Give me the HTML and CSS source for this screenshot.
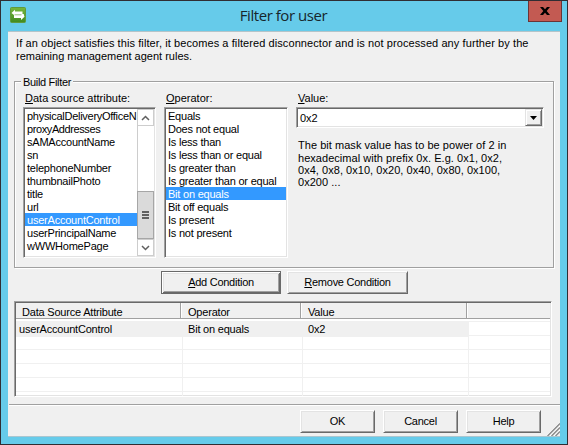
FILE: index.html
```html
<!DOCTYPE html>
<html lang="en">
<head>
<meta charset="utf-8">
<title>Filter for user</title>
<link rel="stylesheet" href="styles.css">
</head>
<body>
<div class="window">
  <header class="titlebar">
    <svg class="app-icon" width="16" height="16" viewBox="0 0 16 16">
      <defs><linearGradient id="g" x1="0" y1="0" x2="0" y2="1"><stop offset="0" stop-color="#77b83c"/><stop offset="1" stop-color="#3f8a20"/></linearGradient></defs>
      <rect x=".5" y=".5" width="15" height="15" rx="1" fill="url(#g)" stroke="#5f9a3c"/>
      <path d="M1.500 6L5 2.800V4.500h7.500V7h1.200L14.500 9.800 11 13v-2H4V8z" fill="#fff"/>
      <path d="M4.500 7.800h7" stroke="#7db25c" stroke-width=".8"/>
    </svg>
    <h1 class="title">Filter for user</h1>
    <button class="close"><svg width="10" height="8" viewBox="0 0 10 8"><path d="M0 0h3l2 2.300L7 0h3L6.700 4 10 8H7L5 5.700 3 8H0l3.300-4z"/></svg></button>
  </header>
  <main class="client">
    <p class="intro"><span class="i1">If an object satisfies this filter, it becomes a filtered disconnector and is not processed any further by the</span><br><span class="i2">remaining management agent rules.</span></p>
    <fieldset class="group">
      <legend>Build Filter</legend>
      <div class="col attr">
        <label><u>D</u>ata source attribute:</label>
        <div class="listbox">
          <ul class="items">
            <li class="long">physicalDeliveryOfficeN</li><li class="tight">proxyAddresses</li><li>sAMAccountName</li><li>sn</li><li>telephoneNumber</li><li>thumbnailPhoto</li><li>title</li><li>url</li><li class="selected">userAccountControl</li><li>userPrincipalName</li><li>wWWHomePage</li>
          </ul>
          <div class="scroll">
            <div class="arrow"><svg width="9" height="6" viewBox="0 0 9 6"><path d="M1 5l3.500-3.500L8 5"/></svg></div>
            <div class="track"></div>
            <div class="thumb"><i></i><i></i><i></i></div>
            <div class="arrow"><svg width="9" height="6" viewBox="0 0 9 6"><path d="M1 1l3.500 3.500L8 1"/></svg></div>
          </div>
        </div>
      </div>
      <div class="col oper">
        <label><u>O</u>perator:</label>
        <div class="listbox">
          <ul class="items">
            <li>Equals</li><li>Does not equal</li><li>Is less than</li><li>Is less than or equal</li><li>Is greater than</li><li>Is greater than or equal</li><li class="selected">Bit on equals</li><li>Bit off equals</li><li>Is present</li><li>Is not present</li>
          </ul>
        </div>
      </div>
      <div class="col val">
        <label><u>V</u>alue:</label>
        <div class="combo"><span>0x2</span><button class="drop"><svg width="7" height="4" viewBox="0 0 7 4"><path d="M0 0h7L3.500 4z"/></svg></button></div>
        <p class="hint"><span>The bit mask value has to be power of 2 in</span><span>hexadecimal with prefix 0x. E.g. 0x1, 0x2,</span><span>0x4, 0x8, 0x10, 0x20, 0x40, 0x80, 0x100,</span><span>0x200 ...</span></p>
      </div>
    </fieldset>
    <div class="actions">
      <button class="btn default"><span><u>A</u>dd Condition</span></button>
      <button class="btn wide"><span><u>R</u>emove Condition</span></button>
    </div>
    <div class="table">
      <div class="row head"><div>Data Source Attribute</div><div>Operator</div><div>Value</div><div></div></div>
      <div class="row first"><div>userAccountControl</div><div>Bit on equals</div><div>0x2</div><div></div></div>
      <div class="row"><div></div><div></div><div></div><div></div></div>
      <div class="row"><div></div><div></div><div></div><div></div></div>
      <div class="row"><div></div><div></div><div></div><div></div></div>
      <div class="row"><div></div><div></div><div></div><div></div></div>
      <div class="row"><div></div><div></div><div></div><div></div></div>
    </div>
    <footer class="footer">
      <button class="btn">OK</button><button class="btn">Cancel</button><button class="btn">Help</button>
      <svg class="grip" width="13" height="13" viewBox="0 0 13 13"><path class="hi" d="M-1 13L13-1M3 13L13 3M7 13l6-6"/><path d="M.5 13L13 .5M4.500 13l8.500-8.500M8.500 13l4.500-4.500"/></svg>
    </footer>
  </main>
</div>
</body>
</html>
```
FILE: styles.css
```css
* { box-sizing: border-box; margin: 0; padding: 0; }
body { width: 568px; height: 445px; overflow: hidden; font: 11px/13px "Liberation Sans", Arial, sans-serif; color: #000; }
button { font: inherit; color: inherit; }
ul { list-style: none; }
u { text-decoration: underline; text-underline-offset: 1px; text-decoration-thickness: 1px; text-decoration-skip-ink: none; }

.window { width: 568px; height: 445px; border: 1px solid #302d33; background: #66cbea; padding: 0 7px 7px; display: flex; flex-direction: column; }
.titlebar { height: 30px; flex: none; display: flex; align-items: flex-start; justify-content: space-between; margin: 0 -2px 0 2px; }
.app-icon { margin-top: 6px; }
.title { font: 15px/20px "Open Sans", "Noto Sans", sans-serif; letter-spacing: -.45px; margin: 4px 0 0 13px; color: #16262c; }
.close { width: 34px; height: 21px; border: 1px solid #6b3335; border-top: 0; background: #c35a52; display: flex; align-items: center; justify-content: center; }

.client { flex: 1; background: #f0f0f0; border-top: 1px solid #b4c4c9; border-bottom: 1px solid #a9c6d0; padding: 5px 8px 0 6px; display: flex; flex-direction: column; }
.intro { padding-left: 2px; height: 39px; white-space: nowrap; }
.i1 { letter-spacing: .085px; }

.group { height: 191px; position: relative; border: 0; display: flex; padding: 16px 9px 0 9px; gap: 8px; }
.group::before { content: ""; position: absolute; inset: 5px 0 0 0; width: 538px; height: 185px; border: 1px solid #a0a0a0; box-shadow: 1px 1px #fff, inset 1px 1px #fff; }
.group legend { position: absolute; z-index: 1; left: 7px; top: 0; padding: 0 2px; background: #f0f0f0; letter-spacing: -.33px; }
.col { position: relative; display: flex; flex-direction: column; }
.attr { width: 133px; }
.oper { width: 124px; }
.val { width: 248px; }
label { height: 15px; padding-left: 2px; white-space: nowrap; }
.listbox { height: 151px; background: #fff; display: flex; border: 1px solid; border-color: #a0a0a0 #fff #fff #a0a0a0; box-shadow: inset 1px 1px #696969, inset -1px -1px #e3e3e3; padding: 1px; letter-spacing: -.22px; }
.items { flex: 1; min-width: 0; overflow: hidden; }
.items li { height: 13px; line-height: 15px; padding-left: 2px; white-space: nowrap; }
.items .long { letter-spacing: -.28px; }
.items .tight { letter-spacing: -.4px; }
.items .selected { background: #3399ff; color: #fff; }
.scroll { width: 17px; display: flex; flex-direction: column; border-left: 1px solid #cdcdcd; }
.arrow { height: 17px; border: 1px solid #cdcdcd; border-left: 0; display: flex; align-items: center; justify-content: center; }
.arrow path { fill: none; stroke: #606060; stroke-width: 1.5; }
.track { flex: 1; }
.thumb { height: 48px; border: 1px solid #a6a6a6; margin-left: -1px; background: #dadada; display: flex; flex-direction: column; align-items: center; justify-content: center; gap: 1px; }
.thumb i { width: 7px; height: 2px; background: #606060; }
.combo { height: 21px; background: #fff; border: 1px solid; border-color: #a0a0a0 #fff #fff #a0a0a0; box-shadow: inset 1px 1px #696969, inset -1px -1px #e3e3e3; padding: 1px; display: flex; justify-content: space-between; line-height: 18px; padding-left: 3px; }
.drop { width: 17px; height: 17px; background: #f0f0f0; border: 1px solid; border-color: #e3e3e3 #696969 #696969 #e3e3e3; box-shadow: inset 1px 1px #fff, inset -1px -1px #a0a0a0; display: flex; align-items: center; justify-content: center; }
.hint { margin: 11px 0 0 2px; line-height: 12px; white-space: nowrap; letter-spacing: .04px; }
.hint span { display: block; }
.hint span:first-child { line-height: 13px; }

.actions { display: flex; gap: 6px; padding: 4px 0 0 147px; height: 34px; }
.btn { width: 75px; height: 23px; background: #f0f0f0; border: 1px solid; border-color: #fff #696969 #696969 #fff; box-shadow: inset 1px 1px #e3e3e3, inset -1px -1px #a0a0a0; white-space: nowrap; letter-spacing: -.26px; }
.btn.wide { width: 121px; }
.btn.default { width: 120px; border-color: #696969; box-shadow: inset 1px 1px #fff, inset -1px -1px #696969, inset 2px 2px #e3e3e3, inset -2px -2px #a0a0a0; }

.table { width: 538px; height: 96px; background: #fff; border: 1px solid; border-color: #a0a0a0 #fff #fff #a0a0a0; box-shadow: inset 1px 1px #696969, inset -1px -1px #e3e3e3; padding: 1px; overflow: hidden; flex: none; letter-spacing: -.2px; }
.row { display: grid; grid-template-columns: 167px 120px 166px 1fr; height: 14px; border-bottom: 1px solid #f0f0f0; }
.row div { border-right: 1px solid #f0f0f0; padding-left: 5px; }
.row div:first-child { padding-left: 3px; }
.row div:last-child { border-right: 0; }
.head { grid-template-columns: 165px 120px 166px 1fr; height: 18px; border: 0; line-height: 18px; }
.head div { height: 16px; background: #f0f0f0; border-right: 1px solid #a0a0a0; border-bottom: 1px solid #a0a0a0; box-shadow: inset 1px 0 #fff; padding-left: 7px; }
.head div:first-child { padding-left: 6px; box-shadow: none; }
.head div:last-child { border-right: 0; }
.row.first { height: 15px; line-height: 15px; border-top: 1px solid #f0f0f0; }
.first div:not(:last-child) { background: #f0f0f0; }

.footer { height: 32px; margin: 7px -8px 0 -5px; border-top: 1px solid #a0a0a0; box-shadow: inset 0 1px #fff; display: flex; padding: 5px 0 0 291px; gap: 8px; position: relative; }
.grip { position: absolute; right: 0; bottom: 0; fill: none; stroke: #8c8c8c; stroke-width: 1.5; }
.grip .hi { stroke: #fff; stroke-width: 1; }
```
